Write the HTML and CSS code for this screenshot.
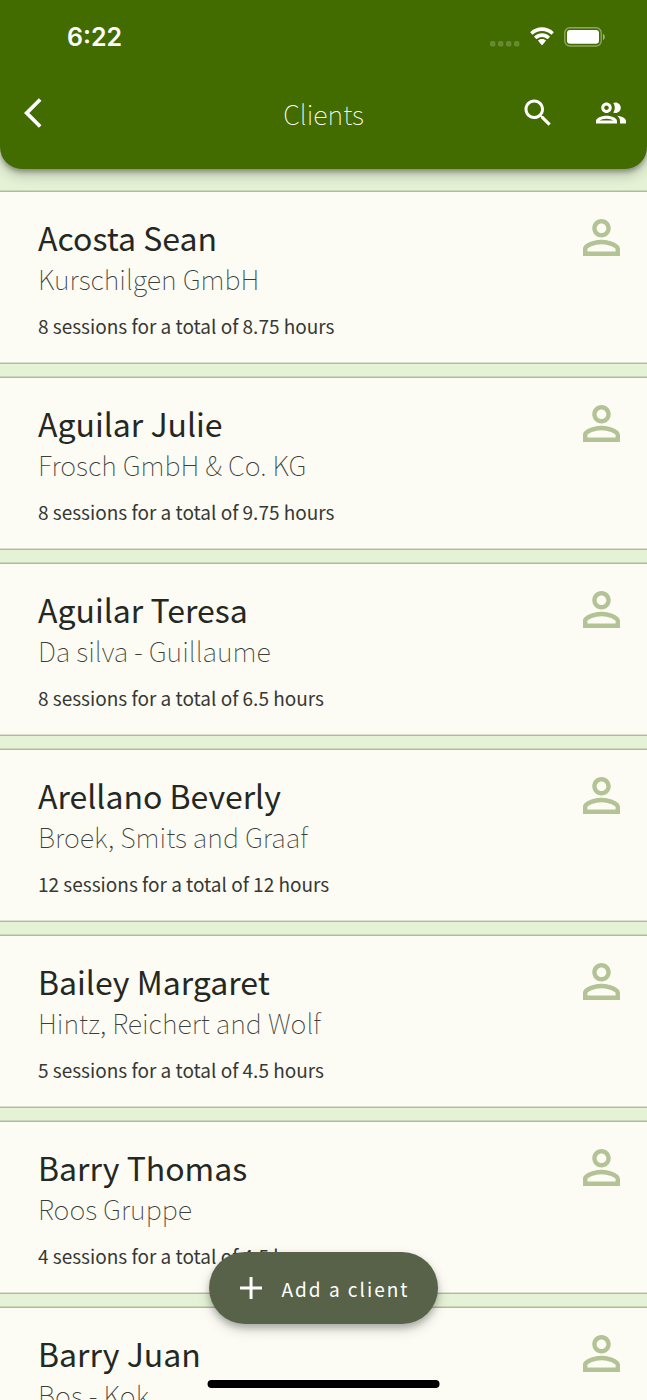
FILE: index.html
```html
<!DOCTYPE html>
<html lang="en">
<head>
<meta charset="utf-8">
<meta name="viewport" content="width=device-width, initial-scale=1">
<title>Clients</title>
<link rel="stylesheet" href="styles.css">
</head>
<body>
<svg class="defs" aria-hidden="true">
  <symbol id="person" viewBox="4 4 16 16"><path d="M12 5.9c1.16 0 2.1.94 2.1 2.1s-.94 2.1-2.1 2.1S9.9 9.16 9.9 8s.94-2.1 2.1-2.1m0 9c2.97 0 6.1 1.46 6.1 2.1v1.1H5.9V17c0-.64 3.13-2.1 6.1-2.1M12 4C9.79 4 8 5.79 8 8s1.79 4 4 4 4-1.79 4-4-1.79-4-4-4zm0 9c-2.67 0-8 1.34-8 4v3h16v-3c0-2.66-5.33-4-8-4z"/></symbol>
</svg>
<div class="app">
  <header class="header">
    <div class="status">
      <span class="time">6:22</span>
      <span class="indicators">
        <svg class="signal" viewBox="0 0 30 6" aria-hidden="true"><rect x="0" width="5.4" height="5.4" rx="1.6"/><rect x="8" width="5.4" height="5.4" rx="1.6"/><rect x="16" width="5.4" height="5.4" rx="1.6"/><rect x="24" width="5.4" height="5.4" rx="1.6"/></svg>
        <svg class="wifi" viewBox="0 0 26 19" aria-hidden="true"><path d="M13 3.9c3.5 0 6.7 1.3 9.100 3.600.2.2.5.2.7 0l1.800-1.900c.2-.2.2-.5 0-.7C18.100-1.300 7.900-1.300 1.400 4.900c-.2.2-.2.5 0 .7l1.800 1.900c.2.2.5.2.7 0C6.300 5.200 9.500 3.900 13 3.900zM13 9.900c1.900 0 3.700.7 5.100 2 .2.2.5.2.7 0l1.900-1.900c.2-.2.2-.5 0-.7-4.300-4.100-11.100-4.100-15.400 0-.2.2-.2.5 0 .7l1.900 1.900c.2.2.5.2.7 0 1.400-1.300 3.200-2 5.100-2zM16.700 14c.2-.2.2-.5 0-.700-2.100-1.800-5.300-1.800-7.400 0-.2.2-.2.5 0 .7l3.300 3.900c.2.2.6.2.8 0z"/></svg>
        <svg class="battery" viewBox="0 0 42 20" aria-hidden="true"><rect x=".8" y=".8" width="36.400" height="18.200" rx="5" fill="none" stroke="#fff" stroke-opacity=".4" stroke-width="1.400"/><rect x="3" y="3" width="32" height="13.800" rx="3"/><path d="M39 6.800c2.400 1 2.400 5.200 0 6.200z" opacity=".5"/></svg>
      </span>
    </div>
    <div class="toolbar">
      <button class="icon-button back" aria-label="Back"><svg viewBox="0 0 24 24"><path d="M11.670 3.870L9.900 2.100 0 12l9.900 9.900 1.770-1.770L3.540 12z"/></svg></button>
      <h1 class="title">Clients</h1>
      <div class="actions">
        <button class="icon-button" aria-label="Search"><svg viewBox="0 0 24 24"><path d="M15.500 14h-.79l-.28-.27C15.410 12.590 16 11.110 16 9.500 16 5.910 13.090 3 9.500 3S3 5.910 3 9.500 5.910 16 9.500 16c1.610 0 3.090-.59 4.230-1.570l.27.28v.79l5 4.990L20.490 19l-4.990-5zm-6 0C7.010 14 5 11.990 5 9.500S7.010 5 9.500 5 14 7.010 14 9.500 11.990 14 9.500 14z"/></svg></button>
        <button class="icon-button" aria-label="Groups"><svg viewBox="0 0 24 24"><path d="M9 13.750c-2.340 0-7 1.170-7 3.500V19h14v-1.750c0-2.330-4.660-3.500-7-3.500zM4.340 17c.84-.58 2.870-1.250 4.660-1.250s3.820.67 4.660 1.250H4.340zM9 12c1.930 0 3.500-1.570 3.500-3.500S10.930 5 9 5 5.500 6.570 5.500 8.500 7.070 12 9 12zm0-5c.83 0 1.500.67 1.500 1.500S9.830 10 9 10s-1.500-.67-1.500-1.500S8.170 7 9 7zm7.040 6.810c1.160.84 1.960 1.960 1.960 3.440V19h4v-1.750c0-2.020-3.500-3.170-5.960-3.440zM15 12c1.930 0 3.500-1.570 3.500-3.500S16.930 5 15 5c-.54 0-1.040.13-1.500.35.63.89 1 1.980 1 3.150s-.37 2.260-1 3.150c.46.22.96.35 1.500.35z"/></svg></button>
      </div>
    </div>
  </header>
  <main class="list">
    <article class="card"><div class="info"><h2 class="name">Acosta Sean</h2><p class="company">Kurschilgen GmbH</p><p class="sessions">8 sessions for a total of 8.75 hours</p></div><svg class="person"><use href="#person"/></svg></article>
    <article class="card"><div class="info"><h2 class="name">Aguilar Julie</h2><p class="company">Frosch GmbH &amp; Co. KG</p><p class="sessions">8 sessions for a total of 9.75 hours</p></div><svg class="person"><use href="#person"/></svg></article>
    <article class="card"><div class="info"><h2 class="name">Aguilar Teresa</h2><p class="company">Da silva - Guillaume</p><p class="sessions">8 sessions for a total of 6.5 hours</p></div><svg class="person"><use href="#person"/></svg></article>
    <article class="card"><div class="info"><h2 class="name">Arellano Beverly</h2><p class="company">Broek, Smits and Graaf</p><p class="sessions">12 sessions for a total of 12 hours</p></div><svg class="person"><use href="#person"/></svg></article>
    <article class="card"><div class="info"><h2 class="name">Bailey Margaret</h2><p class="company">Hintz, Reichert and Wolf</p><p class="sessions">5 sessions for a total of 4.5 hours</p></div><svg class="person"><use href="#person"/></svg></article>
    <article class="card"><div class="info"><h2 class="name">Barry Thomas</h2><p class="company">Roos Gruppe</p><p class="sessions">4 sessions for a total of 4.5 hours</p></div><svg class="person"><use href="#person"/></svg></article>
    <article class="card"><div class="info"><h2 class="name">Barry Juan</h2><p class="company">Bos - Kok</p></div><svg class="person"><use href="#person"/></svg></article>
  </main>
  <button class="fab"><svg class="plus" viewBox="0 0 22 22" aria-hidden="true"><path d="M9.500 0h3v9.500H22v3h-9.500V22h-3v-9.500H0v-3h9.500z"/></svg>Add a client</button>
  <div class="home-bar"></div>
</div>
</body>
</html>
```

FILE: styles.css
```css
* { box-sizing: border-box; }

body {
  margin: 0;
  background: #e5f2d5;
  color: #252723;
  font-family: "Noto Sans CJK SC", "Noto Sans", sans-serif;
}

h1, h2, p { margin: 0; font-weight: 400; }

button {
  border: 0;
  padding: 0;
  background: none;
  color: inherit;
  font: inherit;
  cursor: pointer;
}

svg { display: block; fill: currentColor; }

.defs { position: absolute; width: 0; height: 0; }

.app {
  position: relative;
  display: flex;
  flex-direction: column;
  height: 100vh;
  overflow: hidden;
}

.header {
  position: relative;
  z-index: 1;
  flex: none;
  padding-bottom: 26px;
  border-radius: 0 0 22px 22px;
  background: #426b00;
  box-shadow: 0 3px 5px rgba(0, 0, 0, .3), 0 6px 14px rgba(0, 0, 0, .2);
  color: #fff;
}

.status {
  display: flex;
  align-items: center;
  justify-content: space-between;
  height: 73px;
  padding: 0 41px 0 67px;
}

.time { font: 600 25px/32px Inter, sans-serif; }

.indicators { display: flex; align-items: center; gap: 9px; }
.signal { width: 30px; height: 6px; margin-top: 14px; opacity: .2; }
.wifi { width: 26px; height: 19px; }
.battery { width: 42px; height: 20px; }

.toolbar {
  display: grid;
  grid-template-columns: 1fr auto 1fr;
  align-items: center;
  height: 70px;
  padding: 10px 18px 0;
}

.title { padding-top: 2px; font-size: 27px; font-weight: 100; line-height: 42px; }
.actions { display: flex; justify-content: flex-end; gap: 37px; }
.icon-button, .icon-button svg { width: 36px; height: 36px; }
.back { margin-left: 6px; }

.list {
  flex: 1;
  display: flex;
  flex-direction: column;
  gap: 13px;
  padding-top: 22px;
  overflow-y: auto;
  scrollbar-width: none;
}

.card {
  flex: none;
  display: flex;
  justify-content: space-between;
  align-items: flex-start;
  padding: 24px 27px 22px 38px;
  border: solid #b0b9a2;
  border-width: 1px 0;
  background: #fcfcf4;
  box-shadow: 0 -1px #c9d7b9, inset 0 -1px #dcdfd0;
}

.name { font-size: 32px; line-height: 42px; }
.company { font-size: 27px; font-weight: 100; line-height: 42px; color: #3c3e3a; }
.sessions { margin-top: 11px; font-size: 19px; line-height: 30px; color: #363834; }
.person { width: 37px; height: 37px; margin-top: 3px; color: #b3c396; }

.fab {
  position: absolute;
  bottom: 76px;
  left: 50%;
  z-index: 2;
  display: flex;
  align-items: center;
  gap: 20px;
  height: 72px;
  padding: 0 29px 0 31px;
  border-radius: 36px;
  background: #586249;
  box-shadow: 0 4px 6px rgba(0, 0, 0, .22), 0 6px 14px rgba(0, 0, 0, .15);
  color: #fff;
  font-size: 19px;
  letter-spacing: 2px;
  white-space: nowrap;
  transform: translateX(-50%);
}

.plus { width: 22px; height: 22px; }

.home-bar {
  position: absolute;
  bottom: 12px;
  left: 50%;
  z-index: 2;
  width: 36%;
  height: 8px;
  border-radius: 4px;
  background: #000;
  transform: translateX(-50%);
}
```
